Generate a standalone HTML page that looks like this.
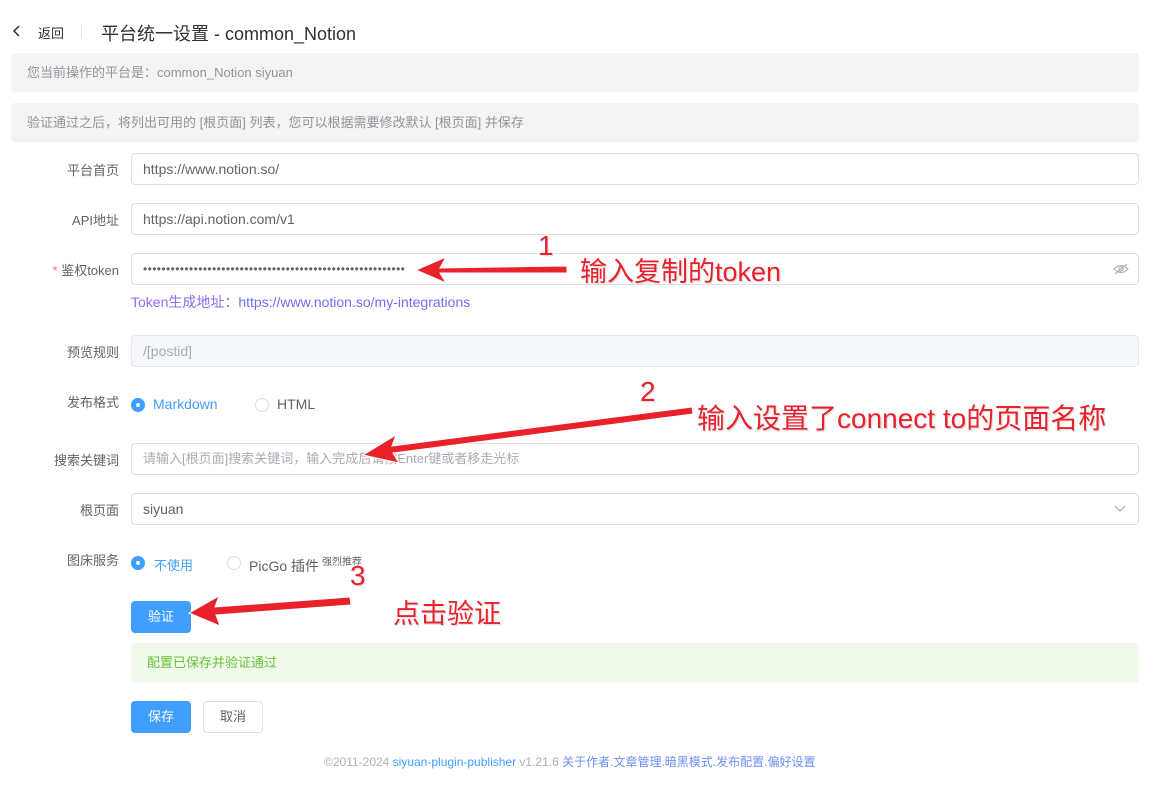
<!DOCTYPE html>
<html><head><meta charset="utf-8">
<style>
*{box-sizing:border-box;margin:0;padding:0}
body{width:1154px;height:803px;background:#fff;font-family:"Liberation Sans","Noto Sans CJK SC",sans-serif;font-size:14px;color:#606266;position:relative;overflow:hidden}
.abs{position:absolute}
.info{position:absolute;left:11px;width:1128px;height:39px;background:#f4f4f5;border-radius:4px;color:#909399;font-size:13px;line-height:39px;padding-left:16px}
.lbl{position:absolute;left:0;width:119px;text-align:right;font-size:13px;color:#606266}
.inp{position:absolute;left:131px;width:1008px;height:32px;border:1px solid #dcdfe6;border-radius:4px;line-height:30px;padding-left:11px;font-size:14px;color:#606266}
.radio{position:absolute;width:14px;height:14px;border-radius:50%;border:1px solid #dcdfe6;background:#fff}
.radio.on{background:#409eff;border-color:#409eff}
.radio.on::after{content:"";position:absolute;left:4px;top:4px;width:4px;height:4px;border-radius:50%;background:#fff}
.btn{position:absolute;height:32px;border-radius:4px;font-size:13px;line-height:32px;text-align:center}
.ann{position:absolute;color:#e8212b;font-size:27px;white-space:nowrap;text-shadow:0 0 2px #fff,0 0 2px #fff,1px 1px 1px #bbb}
</style></head><body>
<svg class="abs" style="left:12px;top:25px" width="10" height="12"><path d="M7 1 L2 6 L7 11" fill="none" stroke="#303133" stroke-width="1.5"/></svg>
<div class="abs" style="left:38px;top:23px;font-size:13px;color:#303133">返回</div>
<div class="abs" style="left:81px;top:24px;width:1px;height:15px;background:#dcdfe6"></div>
<div class="abs" style="left:101px;top:20px;font-size:18px;color:#303133">平台统一设置 - common_Notion</div>

<div class="info" style="top:53px">您当前操作的平台是：common_Notion siyuan</div>
<div class="info" style="top:103px">验证通过之后，将列出可用的 [根页面] 列表，您可以根据需要修改默认 [根页面] 并保存</div>

<div class="lbl" style="top:160px">平台首页</div>
<div class="inp" style="top:153px">https://www.notion.so/</div>
<div class="lbl" style="top:210px">API地址</div>
<div class="inp" style="top:203px">https://api.notion.com/v1</div>
<div class="lbl" style="top:260px"><span style="color:#f56c6c">*</span> 鉴权token</div>
<div class="inp" style="top:253px;letter-spacing:0.4px;font-size:12px">•••••••••••••••••••••••••••••••••••••••••••••••••••••••••</div>
<svg class="abs" style="left:1113px;top:262px" width="16" height="14"><path d="M1 7 Q8 0 15 7 Q8 14 1 7Z" fill="none" stroke="#b0b3b8" stroke-width="1.2"/><circle cx="8" cy="7" r="2.2" fill="none" stroke="#b0b3b8" stroke-width="1.2"/><path d="M2 12 L14 2" stroke="#b0b3b8" stroke-width="1.2"/></svg>
<div class="abs" style="left:131px;top:292px;font-size:14px;color:#8c6cf0">Token生成地址：<span style="color:#6d6ef5">https://www.notion.so/my-integrations</span></div>

<div class="lbl" style="top:342px">预览规则</div>
<div class="inp" style="top:335px;background:#f5f7fa;color:#a8abb2;border-color:#e4e7ed">/[postid]</div>

<div class="lbl" style="top:392px">发布格式</div>
<div class="radio on" style="left:131px;top:398px"></div>
<div class="abs" style="left:153px;top:396px;color:#409eff">Markdown</div>
<div class="radio" style="left:255px;top:398px"></div>
<div class="abs" style="left:277px;top:396px">HTML</div>

<div class="lbl" style="top:450px">搜索关键词</div>
<div class="inp" style="top:443px;color:#a8abb2;font-size:13px">请输入[根页面]搜索关键词，输入完成后请按Enter键或者移走光标</div>
<div class="lbl" style="top:500px">根页面</div>
<div class="inp" style="top:493px">siyuan</div>
<svg class="abs" style="left:1114px;top:505px" width="12" height="8"><path d="M1 1 L6 6 L11 1" fill="none" stroke="#a8abb2" stroke-width="1.2"/></svg>

<div class="lbl" style="top:550px">图床服务</div>
<div class="radio on" style="left:131px;top:556px"></div>
<div class="abs" style="left:154px;top:555px;font-size:13px;color:#409eff">不使用</div>
<div class="radio" style="left:227px;top:556px"></div>
<div class="abs" style="left:249px;top:556px;font-size:14px">PicGo 插件</div>
<div class="abs" style="left:322px;top:553px;font-size:10px">强烈推荐</div>

<div class="btn" style="left:131px;top:601px;width:60px;background:#409eff;color:#fff">验证</div>
<div class="abs" style="left:131px;top:643px;width:1008px;height:40px;background:#f0f9eb;border-radius:4px;color:#67c23a;font-size:13px;line-height:40px;padding-left:16px">配置已保存并验证通过</div>
<div class="btn" style="left:131px;top:701px;width:60px;background:#409eff;color:#fff">保存</div>
<div class="btn" style="left:203px;top:701px;width:60px;border:1px solid #dcdfe6;color:#606266;line-height:30px">取消</div>

<div class="abs" style="left:324px;top:753px;font-size:12px;color:#b0b0b0">©2011-2024 <span style="color:#409eff">siyuan-plugin-publisher</span> v1.21.6 <span style="color:#6d8ef5">关于作者.文章管理.暗黑模式.发布配置.偏好设置</span></div>

<svg class="abs" style="left:0;top:0" width="1154" height="803">
<g fill="#e8212b" stroke="#fff" stroke-width="1">
<path d="M567 266 L440 268 L446 257 L416 270 L446 283 L440 273 L567 273Z"/>
<path d="M692 407 L392 446 L396 435 L363 455 L399 463 L393 453 L693 414Z"/>
<path d="M350 597 L215 607 L219 596 L189 613 L220 626 L216 615 L351 605Z"/>
</g>
</svg>
<div class="ann" style="left:538px;top:230px;font-size:28px">1</div>
<div class="ann" style="left:580px;top:250px;font-size:27px">输入复制的token</div>
<div class="ann" style="left:640px;top:376px;font-size:28px">2</div>
<div class="ann" style="left:697px;top:397px;font-size:28px">输入设置了connect to的页面名称</div>
<div class="ann" style="left:350px;top:560px;font-size:28px">3</div>
<div class="ann" style="left:393px;top:592px;font-size:27px">点击验证</div>
</body></html>
